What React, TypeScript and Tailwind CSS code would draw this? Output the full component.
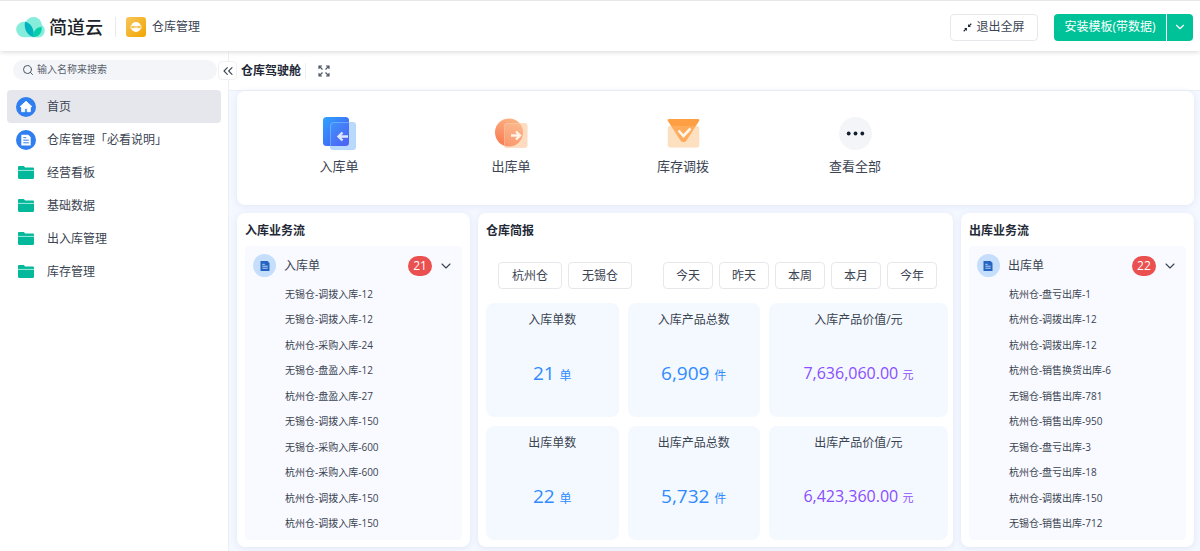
import type { ReactNode } from "react";
import { ChevronDown, ChevronsLeft, Search } from "lucide-react";

const folders = ["经营看板", "基础数据", "出入库管理", "库存管理"];

const inbound = [
  "无锡仓-调拨入库-12",
  "无锡仓-调拨入库-12",
  "杭州仓-采购入库-24",
  "无锡仓-盘盈入库-12",
  "杭州仓-盘盈入库-27",
  "无锡仓-调拨入库-150",
  "无锡仓-采购入库-600",
  "杭州仓-采购入库-600",
  "杭州仓-调拨入库-150",
  "杭州仓-调拨入库-150",
];

const outbound = [
  "杭州仓-盘亏出库-1",
  "杭州仓-调拨出库-12",
  "杭州仓-调拨出库-12",
  "杭州仓-销售换货出库-6",
  "无锡仓-销售出库-781",
  "杭州仓-销售出库-950",
  "无锡仓-盘亏出库-3",
  "杭州仓-盘亏出库-18",
  "杭州仓-调拨出库-150",
  "无锡仓-销售出库-712",
];

const stats = [
  { label: "入库单数", value: "21", unit: "单" },
  { label: "入库产品总数", value: "6,909", unit: "件" },
  { label: "入库产品价值/元", value: "7,636,060.00", unit: "元", money: true },
  { label: "出库单数", value: "22", unit: "单" },
  { label: "出库产品总数", value: "5,732", unit: "件" },
  { label: "出库产品价值/元", value: "6,423,360.00", unit: "元", money: true },
];

const LogoMark = () => (
  <svg viewBox="0 0 29 21" className="h-[21px] w-[29px]">
    <circle cx="17.5" cy="8.5" r="8.5" fill="#86ecdb" />
    <circle cx="8" cy="12.5" r="7.8" fill="#86ecdb" />
    <circle cx="22" cy="13.6" r="6.8" fill="#86ecdb" />
    <path d="M8 20.2h14v-6H8z" fill="#86ecdb" />
    <path d="M9 4.5c5 1.5 9.500 6 8.700 15.700C11.500 18.500 7.500 12.500 9 4.500z" fill="#00b4bd" />
    <path d="M25.500 9.800c1 5.500-2 9.500-7.800 10.400-.7-6 2-9.600 7.800-10.400z" fill="#04cfa8" />
  </svg>
);

const AppIcon = () => (
  <svg viewBox="0 0 20 20" className="size-5">
    <defs>
      <linearGradient id="app" x1="0" y1="0" x2="1" y2="1">
        <stop offset="0" stopColor="#f7c65a" />
        <stop offset="1" stopColor="#f2a500" />
      </linearGradient>
    </defs>
    <rect width="20" height="20" rx="3" fill="url(#app)" />
    <circle cx="10" cy="10" r="5" fill="#fff" />
    <path d="M4.500 8.500h11v3h-11z" fill="#fdf0cf" />
    <path d="M5.500 9.200l.8 1.600.8-1.600.8 1.600.8-1.600M9.200 10h1.600M11.300 9.200l.8 1.600.8-1.600.8 1.600.8-1.600" fill="none" stroke="#f0ab1c" strokeWidth=".8" />
  </svg>
);

const ShrinkIcon = () => (
  <svg viewBox="0 0 10 10" className="size-[9px]" fill="#1f2937" stroke="#1f2937">
    <path d="M5.600 1.200v3.200h3.200z M4.400 8.800V5.600H1.200z" stroke="none" />
    <path d="M6.500 3.500L9.200.8M3.500 6.500L.8 9.200" strokeWidth="1.300" />
  </svg>
);

const ExpandIcon = () => (
  <svg viewBox="0 0 12 12" className="size-3" fill="none" stroke="#4b5563" strokeWidth="1.100">
    <path d="M1 4V1h3M1 1l3.500 3.500M8 1h3v3M11 1L7.500 4.500M1 8v3h3M1 11l3.500-3.500M11 8v3H8M11 11L7.500 7.500" />
  </svg>
);

const HomeIcon = () => (
  <svg viewBox="0 0 20 20" className="size-5">
    <circle cx="10" cy="10" r="10" fill="#2f7ff0" />
    <path d="M10 4.200L4 9.700h1.600v5h3.200v-3.300h2.400v3.300h3.200v-5H16z" fill="#fff" stroke="#fff" strokeWidth=".8" strokeLinejoin="round" />
  </svg>
);

const DocIcon = () => (
  <svg viewBox="0 0 20 20" className="size-5">
    <circle cx="10" cy="10" r="10" fill="#2f7ff0" />
    <path d="M5.300 4.800h7l2.400 2.400v8.300H5.300z" fill="#fff" />
    <path d="M7.300 7.700h3M7.300 10.200h5.500M7.300 12.800h5.500" stroke="#2f7ff0" strokeWidth="1" />
  </svg>
);

const FolderIcon = () => (
  <svg viewBox="0 0 16 13" className="mx-0.5 h-[13px] w-4">
    <path d="M0 1.200C0 .5.500 0 1.200 0h4.600l1.400 1.400h7.600c.7 0 1.200.5 1.200 1.200v9.200c0 .7-.5 1.200-1.200 1.200H1.200C.5 13 0 12.500 0 11.800z" fill="#04b99b" />
    <path d="M0 4.400h16" stroke="#b9efe4" strokeWidth=".9" />
  </svg>
);

const InboundIcon = () => (
  <svg viewBox="0 0 33 33" className="size-[33px]">
    <defs>
      <linearGradient id="in" x1="0" y1="0" x2="1" y2="1">
        <stop offset="0" stopColor="#2fa4ff" />
        <stop offset="1" stopColor="#4a4ff2" />
      </linearGradient>
    </defs>
    <rect x="7" y="5" width="26" height="28" rx="3" fill="#c3defd" />
    <rect width="26" height="29" rx="3.500" fill="url(#in)" />
    <rect x="7.500" y="5.500" width="25" height="27" rx="3" fill="#7dbcff" fillOpacity=".12" stroke="#a9d2ff" strokeOpacity=".45" />
    <path d="M25 19.500H16M19.500 15.500l-4 4 4 4" fill="none" stroke="#dfe6ff" strokeWidth="2.400" />
  </svg>
);

const OutboundIcon = () => (
  <svg viewBox="0 0 33 33" className="size-[33px]">
    <defs>
      <linearGradient id="out" x1=".6" y1="0" x2=".3" y2="1">
        <stop offset="0" stopColor="#fbb283" />
        <stop offset="1" stopColor="#f9784f" />
      </linearGradient>
    </defs>
    <rect x="9" y="6" width="23.500" height="25" rx="2.500" fill="#fde3cd" />
    <circle cx="14" cy="15.500" r="14" fill="url(#out)" />
    <rect x="9.500" y="6.500" width="22.500" height="24" rx="2.500" fill="#fdcda6" fillOpacity=".35" stroke="#fddcc4" strokeOpacity=".4" />
    <path d="M16 18.500h8.500M21 14.500l4 4-4 4" fill="none" stroke="#fff3ea" strokeWidth="2.400" />
  </svg>
);

const TransferIcon = () => (
  <svg viewBox="0 0 33 33" className="size-[33px]">
    <rect x=".8" y="9" width="31.400" height="21.500" rx="2.500" fill="#fde4ca" />
    <path d="M2 2h29c1.300 0 1.700 1 1.100 2L19.500 23.500c-1.500 2.300-4.500 2.300-6 0L.9 4c-.6-1-.2-2 1.100-2z" fill="#ff9f43" />
    <rect x=".8" y="9" width="31.400" height="21.500" rx="2.500" fill="#fdd3a5" fillOpacity=".25" />
    <path d="M11.500 13.500l5 5.500 7-7.500" fill="none" stroke="#fff6ea" strokeWidth="2.600" />
  </svg>
);

const MoreIcon = () => (
  <svg viewBox="0 0 33 33" className="size-[33px]">
    <circle cx="16.500" cy="16.500" r="16.500" fill="#f4f5f8" />
    <circle cx="9.700" cy="16.500" r="1.900" fill="#141e31" />
    <circle cx="16.500" cy="16.500" r="1.900" fill="#141e31" />
    <circle cx="23.300" cy="16.500" r="1.900" fill="#141e31" />
  </svg>
);

const shortcuts = [
  { label: "入库单", icon: <InboundIcon /> },
  { label: "出库单", icon: <OutboundIcon /> },
  { label: "库存调拨", icon: <TransferIcon /> },
  { label: "查看全部", icon: <MoreIcon /> },
];

const NavItem = ({ icon, label, active }: { icon: ReactNode; label: string; active?: boolean }) => (
  <li>
    <a
      href="#"
      className={`flex h-[33px] items-center gap-[11px] rounded px-[9px] ${active ? "bg-[#e6e7ed]" : "hover:bg-gray-100"}`}
    >
      {icon}
      {label}
    </a>
  </li>
);

const Card = ({ title, children }: { title: string; children: ReactNode }) => (
  <section className="flex min-w-0 flex-col rounded-lg bg-white pt-2 pb-[7px] pl-2 shadow-[0_1px_6px_#dfe5f5]">
    <h2 className="mb-1.5 text-xs leading-[19px] font-bold text-[#1f2937]">{title}</h2>
    {children}
  </section>
);

type FlowCardProps = { title: string; name: string; count: number; items: string[] };

const FlowCard = ({ title, name, count, items }: FlowCardProps) => (
  <Card title={title}>
    <div className="mr-2 flex flex-1 flex-col rounded bg-[#f8faff] pr-2 pb-1 pl-2">
      <div className="flex h-[35px] items-center pt-1">
        <span className="flex size-[23px] items-center justify-center rounded-full bg-[#c5defc]">
          <svg viewBox="0 0 10 10" className="size-2.5">
            <path d="M.5 0h7L9.500 2v8h-9z" fill="#2463c0" />
            <path d="M2.300 3.300h2.500M2.300 5.200h5.400M2.300 7.200h5.400" stroke="#c5defc" strokeWidth=".9" />
          </svg>
        </span>
        <h3 className="ml-2 flex-1 text-xs">{name}</h3>
        <span className="flex h-5 w-6 items-center justify-center rounded-full bg-[#eb5050] text-xs text-white">
          {count}
        </span>
        <button type="button" aria-label="收起" className="ml-1.5">
          <ChevronDown className="size-4" strokeWidth={1.7} />
        </button>
      </div>
      <ul className="flex flex-1 flex-col pl-8 text-[10px] leading-4">
        {items.map((item, i) => (
          <li key={i} className="flex flex-1 items-center whitespace-nowrap">
            {item}
          </li>
        ))}
      </ul>
    </div>
  </Card>
);

const FilterButton = ({ label, wide }: { label: string; wide?: boolean }) => (
  <button
    type="button"
    className={`h-[27px] rounded-sm border border-[#e6e8ec] bg-white ${wide ? "w-16" : "w-[50px]"}`}
  >
    {label}
  </button>
);

const Header = () => (
  <header className="relative z-10 flex h-[51px] shrink-0 items-center border-t border-[#e8e8e8] bg-white pt-0.5 pr-[7px] pl-4 shadow-[0_1px_5px_#d8d8d8]">
    <a href="#" className="flex items-center gap-1">
      <LogoMark />
      <span className="text-[18px] leading-6 font-medium text-[#20242a]">简道云</span>
    </a>
    <span className="mr-2.5 ml-3 h-5 w-px bg-[#e8eaed]" />
    <AppIcon />
    <h1 className="ml-1.5 flex-1">仓库管理</h1>
    <button type="button" className="flex h-[27px] w-22 items-center justify-center gap-1 rounded-sm border border-[#e6e8ec]">
      <ShrinkIcon />
      退出全屏
    </button>
    <div className="ml-4 flex h-[27px] gap-px text-white">
      <button type="button" className="w-28 rounded-l-sm bg-[#00c298]">
        安装模板(带数据)
      </button>
      <button type="button" aria-label="更多安装选项" className="flex w-[26px] items-center justify-center rounded-r-sm bg-[#00c298]">
        <ChevronDown className="size-3.5" />
      </button>
    </div>
  </header>
);

const Sidebar = () => (
  <aside className="relative w-[229px] shrink-0 border-r border-[#eceef3] bg-white px-[7px] pt-[9px]">
    <label className="mr-1 ml-1.5 flex h-5 items-center gap-[3px] rounded-full bg-[#f3f5f8] px-[9px]">
      <Search className="size-3 text-[#4b5563]" />
      <input
        type="text"
        placeholder="输入名称来搜索"
        aria-label="搜索"
        className="min-w-0 flex-1 bg-transparent text-[10px] outline-none placeholder:text-[#59616e]"
      />
    </label>
    <button
      type="button"
      aria-label="收起侧栏"
      className="absolute top-2.5 -right-[9px] flex size-[19px] items-center justify-center rounded-sm border border-[#f0f1f4] bg-white"
    >
      <ChevronsLeft className="size-4 shrink-0" strokeWidth={1.6} />
    </button>
    <nav className="mt-2.5">
      <ul>
        <NavItem icon={<HomeIcon />} label="首页" active />
        <NavItem icon={<DocIcon />} label="仓库管理「必看说明」" />
        {folders.map((name) => (
          <NavItem key={name} icon={<FolderIcon />} label={name} />
        ))}
      </ul>
    </nav>
  </aside>
);

const App = () => {
  return (
    <div className="flex min-h-screen flex-col bg-white font-['Open_Sans','Noto_Sans_CJK_SC',sans-serif] text-xs text-[#3b4452]">
      <Header />
      <div className="flex flex-1">
        <Sidebar />
        <main className="flex min-w-0 flex-1 flex-col">
          <div className="flex h-10 items-center border-b border-[#eceef3] bg-white pl-3">
            <h2 className="font-bold text-[#1f2937]">仓库驾驶舱</h2>
            <span className="mr-3 ml-1 h-4 w-px bg-[#eceef1]" />
            <button type="button" aria-label="全屏">
              <ExpandIcon />
            </button>
          </div>

          <div className="flex flex-1 flex-col gap-2 bg-[#f4f8ff] pr-1.5 pb-1 pl-2">
            {/* Shortcuts */}
            <div className="flex rounded-lg bg-white pt-[26px] pb-7 pl-4 shadow-[0_1px_6px_#dfe5f5]">
              {shortcuts.map((s) => (
                <a key={s.label} href="#" className="flex w-43 flex-col items-center gap-1.5 text-[13px] leading-[21px]">
                  {s.icon}
                  {s.label}
                </a>
              ))}
            </div>

            <div className="grid flex-1 grid-cols-[27fr_55fr_27fr] gap-2">
              <FlowCard title="入库业务流" name="入库单" count={21} items={inbound} />

              <Card title="仓库简报">
                <div className="flex justify-between px-3 pt-4 pb-3.5">
                  <div className="flex gap-1.5">
                    <FilterButton label="杭州仓" wide />
                    <FilterButton label="无锡仓" wide />
                  </div>
                  <div className="mr-1 flex gap-1.5">
                    <FilterButton label="今天" />
                    <FilterButton label="昨天" />
                    <FilterButton label="本周" />
                    <FilterButton label="本月" />
                    <FilterButton label="今年" />
                  </div>
                </div>
                <dl className="mr-[5px] grid flex-1 grid-cols-[37fr_37fr_50fr] gap-[9px]">
                  {stats.map((s) => (
                    <div key={s.label} className="flex flex-col items-center rounded-lg bg-[#f4f9ff] pt-2">
                      <dt className="leading-[18px]">{s.label}</dt>
                      <dd
                        className={`mt-7 leading-8 ${s.money ? "text-[16px] text-[#8a4dff]" : "text-[19px] text-[#2f8bff]"}`}
                      >
                        {s.value} <span className={s.money ? "text-[11px]" : "text-xs"}>{s.unit}</span>
                      </dd>
                    </div>
                  ))}
                </dl>
              </Card>

              <FlowCard title="出库业务流" name="出库单" count={22} items={outbound} />
            </div>
          </div>
        </main>
      </div>
    </div>
  );
};

export default App;
